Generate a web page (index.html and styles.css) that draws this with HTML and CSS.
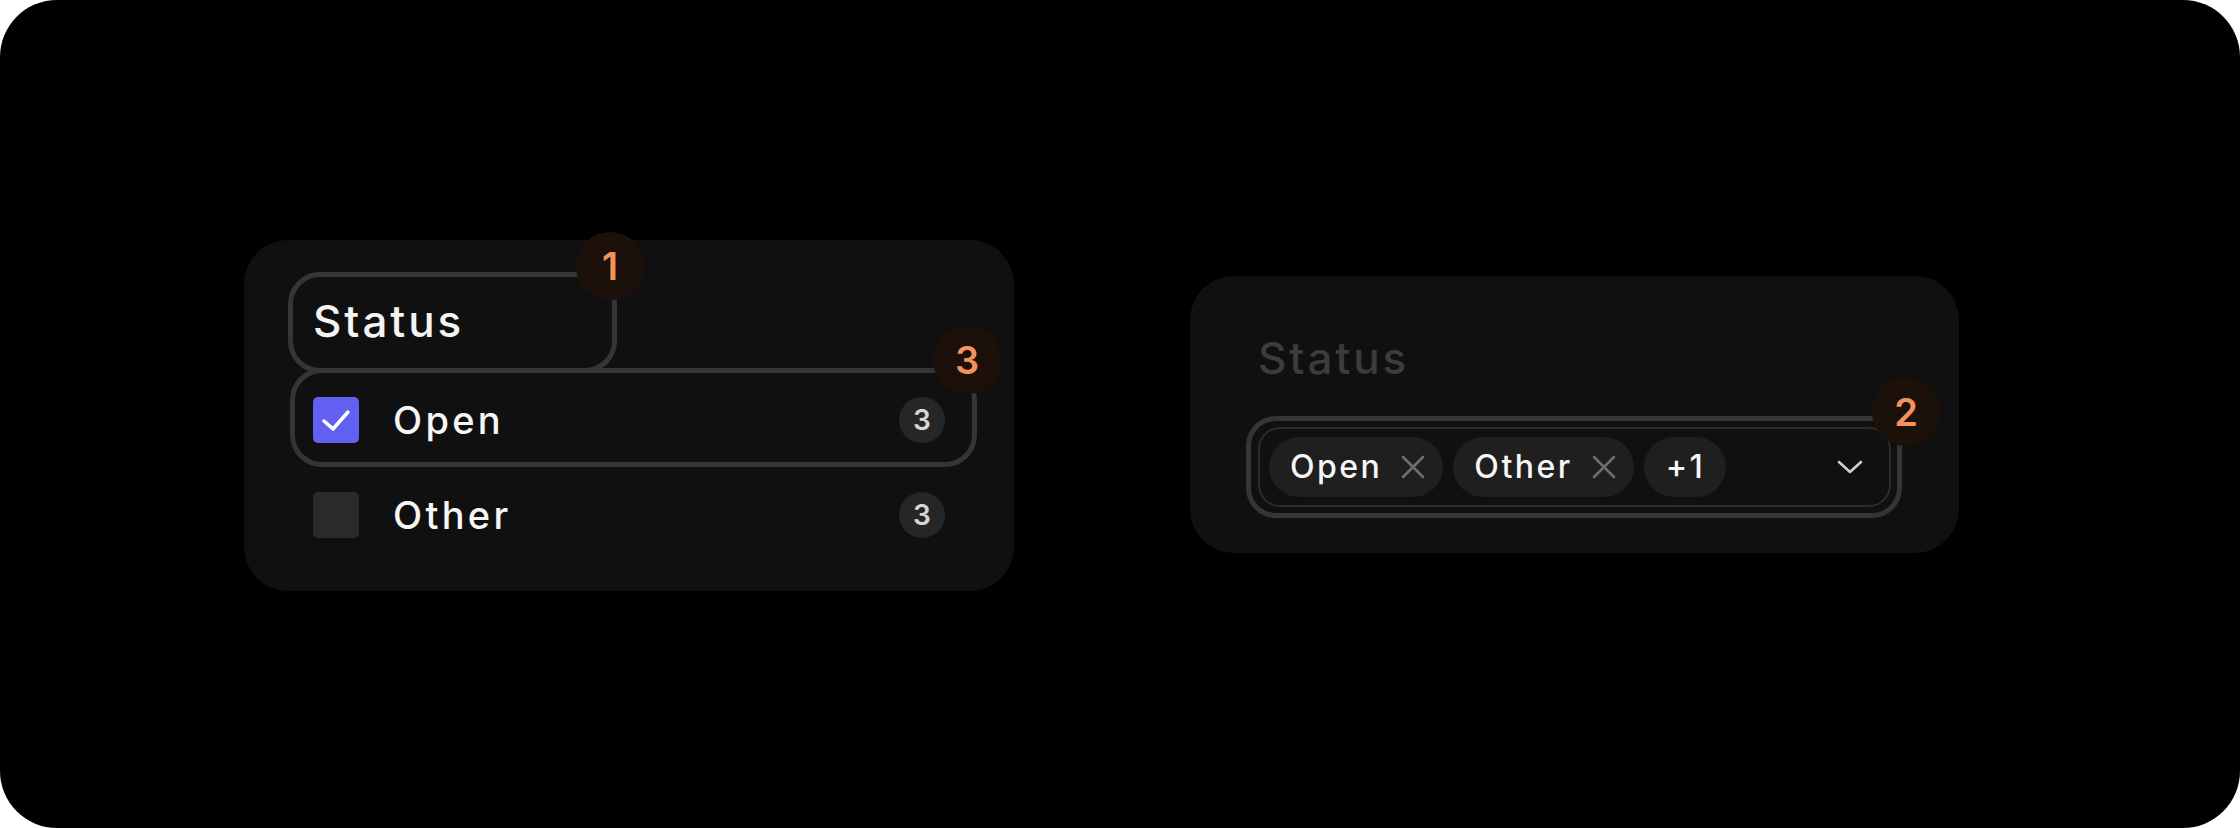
FILE: index.html
```html
<!DOCTYPE html>
<html lang="en">
    <head>
        <meta charset="UTF-8" />
        <meta name="viewport" content="width=device-width, initial-scale=1.0" />
        <title>Status filter</title>
        <link rel="stylesheet" href="styles.css">
    </head>
    <body>
        <div class="frame">
            <!-- list variant -->
            <div class="card list">
                <div class="title">
                    Status
                    <span class="outline title-outline"></span>
                    <span class="badge badge-title">1</span>
                </div>
                <div class="row">
                    <span class="box checked">
                        <svg width="46" height="46" viewBox="0 0 46 46"><polyline points="11,24 20,32 35,15" fill="none" stroke="#fff" stroke-width="3.5" stroke-linecap="round" stroke-linejoin="round"/></svg>
                    </span>
                    <span class="label">Open</span>
                    <span class="count">3</span>
                    <span class="outline row-outline"></span>
                    <span class="badge badge-row">3</span>
                </div>
                <div class="row">
                    <span class="box"></span>
                    <span class="label">Other</span>
                    <span class="count">3</span>
                </div>
            </div>

            <!-- select variant -->
            <div class="card pick">
                <div class="title muted">Status</div>
                <div class="select">
                    <span class="chip">Open
                        <svg class="x" width="24" height="24" viewBox="0 0 24 24"><path d="M2 2 L22 22 M22 2 L2 22" stroke="#6e6e6e" stroke-width="2.6" stroke-linecap="round"/></svg>
                    </span>
                    <span class="chip">Other
                        <svg class="x" width="24" height="24" viewBox="0 0 24 24"><path d="M2 2 L22 22 M22 2 L2 22" stroke="#6e6e6e" stroke-width="2.6" stroke-linecap="round"/></svg>
                    </span>
                    <span class="chip more">+1</span>
                    <svg class="chev" width="26" height="14" viewBox="0 0 26 14"><polyline points="2,2 13,12 24,2" fill="none" stroke="#cfcfcf" stroke-width="2.6" stroke-linecap="round" stroke-linejoin="round"/></svg>
                    <span class="outline select-outline"></span>
                    <span class="badge badge-select">2</span>
                </div>
            </div>
        </div>
    </body>
</html>
```

FILE: styles.css
```css
* {
    margin: 0px;
    padding: 0px;
    box-sizing: border-box;
}
body {
    background-color: #fff;
    font-family: Inter, "Noto Sans", sans-serif;
}
.frame {
    width: 2240px;
    height: 828px;
    background-color: #000;
    border-radius: 57px;
    display: flex;
    align-items: center;
    padding-left: 244px;
    gap: 176px;
}

.card {
    background-color: #101010;
    border-radius: 44px;
}
.list {
    width: 770px;
    height: 351px;
    padding: 51px 69px 0;
    margin-top: 2px;
}
.pick {
    width: 769px;
    height: 277px;
    padding: 52px 68px 0;
}

.title {
    position: relative;
    font-size: 44px;
    line-height: 60px;
    font-weight: 500;
    letter-spacing: 2.9px;
    color: #f4f4f4;
    margin-bottom: 22px;
}
.muted {
    color: #3c3c3c;
    margin-bottom: 39px;
}

.row {
    position: relative;
    display: flex;
    align-items: center;
    height: 95px;
}
.box {
    width: 46px;
    height: 46px;
    border-radius: 5px;
    background-color: #2a2a2a;
    margin-right: 34px;
}
.box.checked {
    background-color: #6160f0;
}
.box svg {
    display: block;
}
.label {
    flex: 1;
    font-size: 38px;
    font-weight: 500;
    letter-spacing: 3.3px;
    color: #f6f6f6;
}
.count {
    width: 46px;
    height: 46px;
    border-radius: 50%;
    background-color: #262626;
    color: #d6d6d6;
    font-size: 28px;
    font-weight: 600;
    display: flex;
    align-items: center;
    justify-content: center;
}

.select {
    position: relative;
    height: 80px;
    border: 2px solid #2b2b2b;
    border-radius: 22px;
    padding: 0 26px 0 9px;
    display: flex;
    align-items: center;
    gap: 10px;
}
.chip {
    height: 60px;
    border-radius: 30px;
    background-color: #1f1f1f;
    color: #f6f6f6;
    font-size: 32px;
    font-weight: 500;
    letter-spacing: 2.5px;
    display: flex;
    align-items: center;
    gap: 19px;
    padding: 0 18px 0 21px;
}
.chip.more {
    padding: 0 21px 0 22px;
}
.chev {
    margin-left: auto;
}

/* annotation marks */
.outline {
    position: absolute;
    border: 5px solid #353535;
    border-radius: 32px;
}
.title-outline {
    left: -25px;
    top: -19px;
    width: 329px;
    height: 101px;
}
.row-outline {
    left: -23px;
    top: -5px;
    right: -32px;
    bottom: 1px;
}
.select-outline {
    left: -14px;
    top: -13px;
    right: -13px;
    bottom: -13px;
    border-radius: 30px;
}
.badge {
    position: absolute;
    width: 68px;
    height: 68px;
    border-radius: 50%;
    background-color: #1c100a;
    color: #f2935a;
    font-size: 38px;
    font-weight: 600;
    letter-spacing: 0;
    display: flex;
    align-items: center;
    justify-content: center;
}
.badge-title {
    left: 263px;
    top: -59px;
}
.badge-row {
    left: 620px;
    top: -47px;
}
.badge-select {
    left: 612px;
    top: -51px;
}
```
